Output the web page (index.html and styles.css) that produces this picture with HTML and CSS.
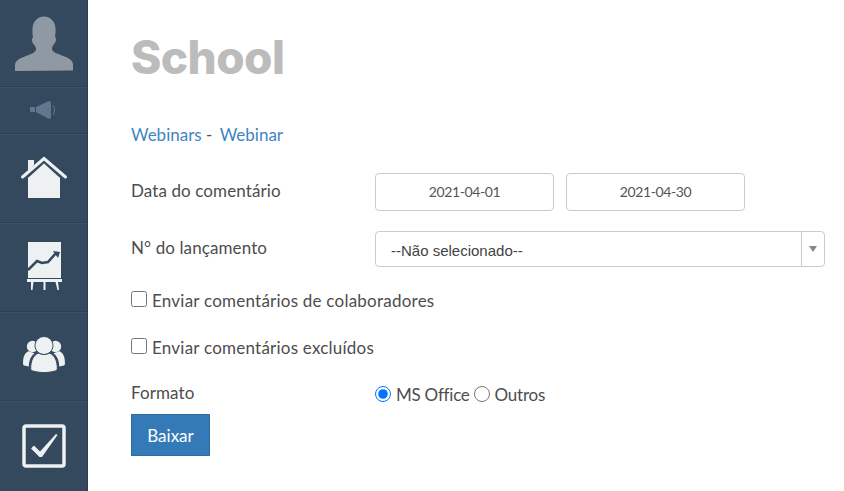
FILE: index.html
```html
<!DOCTYPE html>
<html lang="pt">
<head>
<meta charset="utf-8">
<title>School</title>
<link rel="stylesheet" href="styles.css">
</head>
<body>
<div class="app">
  <nav class="sidebar">
    <div class="cell cell-user">
      <svg width="60" height="58" viewBox="0 0 60 58"><path fill="#8f99a4" d="M1 56v-6c0-3 2-5 6-7l10-4c4-1.600 5-3 5-5.500 0-1.500-1-2-2-4-1-.5-2-2.500-2-5 0-1 .5-1.500 1-2-.5-3-.8-6-.5-9C19 6 24 1.500 30 1.500S41 6 41.500 13c.3 3 0 6-.5 9 .5.500 1 1 1 2 0 2.500-1 4.500-2 5-1 2-2 2.500-2 4 0 2.500 1 3.900 5 5.500l10 4c4 2 6 4 6 7v6z"/></svg>
    </div>
    <div class="cell cell-sound">
      <svg width="30" height="20" viewBox="0 0 30 20"><g fill="#62778e"><rect x="1" y="7" width="5" height="5"/><path d="M7 7l13-6c1 0 2 1 2 2v14c0 1-1 2-2 2L7 12z"/></g><path d="M24 5c2 3 2 7 0 10" fill="none" stroke="#62778e"/></svg>
    </div>
    <div class="cell cell-nav">
      <svg width="48" height="44" viewBox="0 0 48 44"><path fill="#edf1f2" d="M8 4h6v5l-6 6zM8 21L24 6l16 15v21H8z"/><path fill="none" stroke="#edf1f2" stroke-width="3" stroke-linecap="round" d="M2.500 20.500L24 2l21.500 18.500" transform="translate(0 .5)"/><path fill="none" stroke="#34495e" stroke-width="1.500" d="M8 21L24 6.500 40 21"/></svg>
    </div>
    <div class="cell cell-nav">
      <svg width="36" height="50" viewBox="0 0 36 50"><path fill="#edf1f2" d="M2 0h33v36H2z"/><path fill="none" stroke="#34495e" stroke-width="2.500" d="M2 28l9-9 5 2 6-1 8-9"/><path fill="#34495e" d="M34 10l-7-1 5 7z"/><path fill="#edf1f2" d="M1 37h35v3H1zM5 40h2.500l-1 8H5zM17.500 40h2v8h-2zM29.500 40H32l1 8h-1.500z"/></svg>
    </div>
    <div class="cell cell-nav">
      <svg width="44" height="40" viewBox="0 0 46 42"><g fill="#edf1f2"><circle cx="11" cy="11" r="6"/><circle cx="35" cy="11" r="6"/><path d="M1 28c0-6 2-11 6-12l6 2c-4 3-6 8-6 14l-5-1c-1-1-1-2-1-3zM45 28c0-6-2-11-6-12l-6 2c4 3 6 8 6 14l5-1c1-1 1-2 1-3z"/></g><circle cx="23" cy="10" r="9.500" fill="#edf1f2" stroke="#34495e"/><path fill="#edf1f2" stroke="#34495e" d="M9 34c0-8 3-14 8-16 4 2 8 2 12 0 5 2 8 8 8 16 0 1-.5 2-1.500 2.500-8 2.500-17 2.500-25 0C9.500 36 9 35 9 34z"/></svg>
    </div>
    <div class="cell cell-nav cell-last">
      <svg width="44" height="44" viewBox="0 0 44 44"><rect x="2" y="2" width="40" height="40" rx="2" fill="none" stroke="#edf1f2" stroke-width="3.500"/><path fill="#edf1f2" d="M9 24.500l3-3 6 6L34 10l1.500 1L20 33h-2.500z"/></svg>
    </div>
  </nav>
  <main class="content">
    <h1 class="title">School</h1>
    <p class="crumbs"><a class="crumb" href="#">Webinars</a><span class="crumb-sep"> - </span><a class="crumb" href="#">Webinar</a></p>
    <div class="row row-date">
      <label class="label">Data do comentário</label>
      <div class="dates">
        <input class="date" type="text" value="2021-04-01">
        <input class="date" type="text" value="2021-04-30">
      </div>
    </div>
    <div class="row row-select">
      <label class="label">N° do lançamento</label>
      <div class="select">
        <span class="select-text">--Não selecionado--</span>
        <span class="select-arrow"></span>
      </div>
    </div>
    <label class="check check-first"><input class="box" type="checkbox"> <span>Enviar comentários de colaboradores</span></label>
    <label class="check check-second"><input class="box" type="checkbox"> <span>Enviar comentários excluídos</span></label>
    <div class="row row-format">
      <span class="label">Formato</span>
      <div class="radios">
        <label class="radio"><input class="box" type="radio" name="fmt" checked> <span>MS Office</span></label>
        <label class="radio"><input class="box" type="radio" name="fmt"> <span>Outros</span></label>
      </div>
    </div>
    <button class="btn" type="button">Baixar</button>
  </main>
</div>
</body>
</html>
```
FILE: styles.css
```css
* { box-sizing: border-box; }
html, body { margin: 0; height: 100%; background: #fff; }
body { font-family: Lato, "Open Sans", sans-serif; font-size: 17px; color: #4d4d4d; overflow: hidden; }
.app { display: flex; height: 491px; }
.sidebar { width: 88px; flex: none; background: #34495e; border-right: 1px solid #2c3e50; display: flex; flex-direction: column; }
.cell { display: flex; align-items: center; justify-content: center; border-bottom: 1px solid #2c3e50; box-shadow: 0 1px 0 #3d5269; }
.cell-user { height: 87px; padding-top: 1px; }
.cell-sound { height: 47px; }
.cell-nav { height: 89px; }
.cell-last { border-bottom: 0; box-shadow: none; flex: 1; }
.content { flex: 1; padding: 0 19px 0 43px; }
.title { margin: 0; padding-top: 27px; height: 92px; font-family: Inter, Lato, sans-serif; font-size: 46px; line-height: 60px; font-weight: 800; letter-spacing: -.6px; color: #bcbcbc; }
.crumbs { margin: 33px 0 0; line-height: 20px; height: 20px; }
.crumb { color: #3f85c2; text-decoration: none; }
.crumb-sep { margin-right: 3px; }
.row { display: flex; }
.label { width: 244px; flex: none; line-height: 24px; letter-spacing: .1px; padding-bottom: 2px; }
.row-date { margin-top: 28px; align-items: center; }
.dates { display: flex; gap: 12px; }
.date { width: 179px; height: 38px; border: 1px solid #ccc; border-radius: 4px; text-align: center; font: inherit; font-size: 14px; letter-spacing: -.4px; color: #555; padding: 0 0 1px; }
.row-select { margin-top: 20px; align-items: center; }
.select { flex: 1; height: 36px; border: 1px solid #ccc; border-radius: 4px; display: flex; align-items: center; }
.select-text { flex: 1; padding: 2px 0 0 15px; font-family: "Liberation Sans", Arial, sans-serif; font-size: 15px; color: #444; }
.select-arrow { width: 23px; height: 100%; border-left: 1px solid #ccc; position: relative; }
.select-arrow::after { content: ""; position: absolute; left: 7px; top: 14px; border: 4px solid transparent; border-top: 6px solid #888; border-bottom: 0; }
.check { display: flex; align-items: center; gap: 5px; line-height: 24px; letter-spacing: .23px; }
.check-first { margin-top: 22px; }
.check-second { margin-top: 23px; }
.check .box { position: relative; top: -2px; }
.box { width: 16px; height: 16px; margin: 0; flex: none; }
.row-format { margin-top: 21px; height: 24px; }
.radios { display: flex; gap: 4px; margin-top: 2px; letter-spacing: -.25px; }
.radio { display: flex; align-items: center; gap: 5px; }
.btn { display: block; margin-top: 9px; width: 79px; height: 42px; background: #337ab7; border: 1px solid #2e6da4; color: #fff; font: inherit; font-size: 17px; padding: 0; }
```
